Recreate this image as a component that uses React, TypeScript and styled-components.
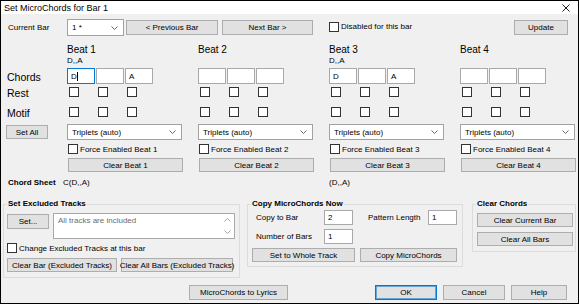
import React from 'react';
import styled, { createGlobalStyle, css } from 'styled-components';

const GlobalStyle = createGlobalStyle`
  html, body {
    margin: 0;
    padding: 0;
    background: #fff;
  }
  body {
    font-family: 'Liberation Sans', Arial, sans-serif;
    font-size: 8px;
    color: #000;
  }
  * {
    box-sizing: border-box;
  }
`;

type Beat = {
  n: number;
  chord: string;
  inputs: string[];
  focused?: boolean;
};

const beats: Beat[] = [
  { n: 1, chord: 'D,,A', inputs: ['D', '', 'A'], focused: true },
  { n: 2, chord: '', inputs: ['', '', ''] },
  { n: 3, chord: 'D,,A', inputs: ['D', '', 'A'] },
  { n: 4, chord: '', inputs: ['', '', ''] },
];

const Chevron = ({ up }: { up?: boolean }) => (
  <svg width="7" height="4" viewBox="0 0 7 4">
    <path d={up ? 'M0.5 3.5 L3.5 0.5 L6.5 3.5' : 'M0.5 0.5 L3.5 3.5 L6.5 0.5'} fill="none" stroke="#5a5a5a" strokeWidth="0.9" />
  </svg>
);

const CloseIcon = () => (
  <svg width="8" height="8" viewBox="0 0 8 8">
    <path d="M0.5 0.5 L7.5 7.5 M7.5 0.5 L0.5 7.5" stroke="#000" strokeWidth="0.9" />
  </svg>
);

const Check = ({ label }: { label: string }) => (
  <CheckLabel>
    <Box />
    <span>{label}</span>
  </CheckLabel>
);

const App = () => {
  return (
    <>
      <GlobalStyle />
      <Window>
        <TitleBar>
          <TitleText>Set MicroChords for Bar 1</TitleText>
          <CloseIcon />
        </TitleBar>
        <Body>
          <TopRow>
            <RowLabel>Current Bar</RowLabel>
            <Combo $w={57} $h={17}>
              <span>1 *</span>
              <Chevron />
            </Combo>
            <Button $w={92} style={{ marginLeft: 2 }}>&lt; Previous Bar</Button>
            <Button $w={91} style={{ marginLeft: 4 }}>Next Bar &gt;</Button>
            <TopCheck>
              <Check label="Disabled for this bar" />
            </TopCheck>
            <UpdateButton $w={54}>Update</UpdateButton>
          </TopRow>

          <BeatGrid>
            <span />
            {beats.map((b) => (
              <BeatHead key={`h${b.n}`}>
                <BeatTitle>Beat {b.n}</BeatTitle>
                <BeatChord>{b.chord}</BeatChord>
              </BeatHead>
            ))}

            <SideLabel>Chords</SideLabel>
            {beats.map((b) => (
              <Triple key={`c${b.n}`}>
                {b.inputs.map((v, i) => (
                  <ChordInput key={i} $focused={b.focused && i === 0}>
                    {v}
                    {b.focused && i === 0 && <Caret />}
                  </ChordInput>
                ))}
              </Triple>
            ))}

            <SideLabel>Rest</SideLabel>
            {beats.map((b) => (
              <BoxRow key={`r${b.n}`}>
                <Box />
                <Box />
                <Box />
              </BoxRow>
            ))}

            <SideLabel>Motif</SideLabel>
            {beats.map((b) => (
              <BoxRow key={`m${b.n}`}>
                <Box />
                <Box />
                <Box />
              </BoxRow>
            ))}

            <SetAllButton $w={42} $h={14}>Set All</SetAllButton>
            {beats.map((b) => (
              <Combo key={`t${b.n}`} $w={115} $h={16}>
                <span>Triplets (auto)</span>
                <Chevron />
              </Combo>
            ))}

            <span />
            {beats.map((b) => (
              <ForceCell key={`f${b.n}`}>
                <Check label={`Force Enabled Beat ${b.n}`} />
              </ForceCell>
            ))}

            <span />
            {beats.map((b) => (
              <ClearBeat key={`x${b.n}`} $w={115} $h={14}>
                Clear Beat {b.n}
              </ClearBeat>
            ))}
          </BeatGrid>

          <ChordSheetRow>
            <ChordSheetLabel>Chord Sheet</ChordSheetLabel>
            <ChordSheetValue>C(D,,A)</ChordSheetValue>
            <span>(D,,A)</span>
          </ChordSheetRow>

          <GroupsRow>
            <Group $w={237} $h={79}>
              <Legend>Set Excluded Tracks</Legend>
              <ExcludedContent>
                <ExcludedTop>
                  <SetButton $w={42}>Set...</SetButton>
                  <TrackList>
                    <span>All tracks are included</span>
                    <ScrollArrows>
                      <Chevron up />
                      <Chevron />
                    </ScrollArrows>
                  </TrackList>
                </ExcludedTop>
                <ExcludedCheck>
                  <Check label="Change Excluded Tracks at this bar" />
                </ExcludedCheck>
                <ButtonPair $gap={4}>
                  <Button $w={110} $h={14}>Clear Bar (Excluded Tracks)</Button>
                  <Button $w={112} $h={14}>Clear All Bars (Excluded Tracks)</Button>
                </ButtonPair>
              </ExcludedContent>
            </Group>

            <Group $w={216} $h={68} $ml={7}>
              <Legend>Copy MicroChords Now</Legend>
              <CopyContent>
                <CopyGrid>
                  <FieldLabel>Copy to Bar</FieldLabel>
                  <NumberInput>2</NumberInput>
                  <FieldLabel $indent={15}>Pattern Length</FieldLabel>
                  <NumberInput>1</NumberInput>
                  <FieldLabel>Number of Bars</FieldLabel>
                  <NumberInput>1</NumberInput>
                </CopyGrid>
                <ButtonPair $gap={5}>
                  <Button $w={103} $h={14}>Set to Whole Track</Button>
                  <Button $w={97} $h={14}>Copy MicroChords</Button>
                </ButtonPair>
              </CopyContent>
            </Group>

            <Group $w={104} $h={53} $ml={9}>
              <Legend>Clear Chords</Legend>
              <ClearContent>
                <Button $w={96} $h={14}>Clear Current Bar</Button>
                <Button $w={96} $h={14}>Clear All Bars</Button>
              </ClearContent>
            </Group>
          </GroupsRow>

          <BottomRow>
            <Button $w={99} style={{ marginLeft: 186 }}>MicroChords to Lyrics</Button>
            <Button $w={62} $default style={{ marginLeft: 87 }}>OK</Button>
            <Button $w={62} style={{ marginLeft: 6 }}>Cancel</Button>
            <Button $w={56} style={{ marginLeft: 6 }}>Help</Button>
          </BottomRow>
        </Body>
      </Window>
    </>
  );
};

export default App;

const Window = styled.div`
  width: 579px;
  height: 304px;
  border: 1px solid #000;
  background: #f0f0f0;
  display: flex;
  flex-direction: column;
  overflow: hidden;
`;

const TitleBar = styled.div`
  height: 13px;
  flex: none;
  background: #fff;
  display: flex;
  align-items: center;
  justify-content: space-between;
  padding: 0 8px 0 3px;
`;

const TitleText = styled.span`
  font-size: 9px;
`;

const Body = styled.div`
  display: flex;
  flex-direction: column;
  padding: 0 2px;
`;

const TopRow = styled.div`
  display: flex;
  align-items: center;
  height: 17px;
  margin-top: 5px;
  padding-left: 3px;
`;

const RowLabel = styled.span`
  width: 61px;
  flex: none;
  padding-left: 2px;
`;

const Combo = styled.div<{ $w: number; $h: number }>`
  width: ${({ $w }) => $w}px;
  height: ${({ $h }) => $h}px;
  flex: none;
  display: flex;
  align-items: center;
  justify-content: space-between;
  padding: 0 5px 0 4px;
  background: #fff;
  border: 1px solid #a2a2a2;
`;

const Button = styled.button<{ $w: number; $h?: number; $default?: boolean }>`
  width: ${({ $w }) => $w}px;
  height: ${({ $h }) => $h ?? 15}px;
  flex: none;
  display: flex;
  align-items: center;
  justify-content: center;
  padding: 0;
  margin: 0;
  background: #e1e1e1;
  border: 1px solid ${({ $default }) => ($default ? '#0078d7' : '#adadad')};
  ${({ $default }) =>
    $default &&
    css`
      box-shadow: inset 0 0 0 1px rgba(0, 120, 215, 0.55);
    `}
  font-family: inherit;
  font-size: 8px;
  color: #000;
  white-space: nowrap;
`;

const UpdateButton = styled(Button)`
  margin-left: auto;
  margin-right: 8px;
`;

const TopCheck = styled.div`
  margin-left: 16px;
`;

const CheckLabel = styled.label`
  display: inline-flex;
  align-items: center;
  gap: 2px;
  white-space: nowrap;
`;

const Box = styled.span`
  width: 10px;
  height: 10px;
  flex: none;
  background: #fff;
  border: 1px solid #333;
`;

const BeatGrid = styled.div`
  display: grid;
  grid-template-columns: 45px repeat(4, 115px);
  grid-template-rows: 24px 16px 16px 24px 16px 18px 14px;
  column-gap: 16px;
  margin-top: 8px;
  padding-left: 3px;
`;

const BeatHead = styled.div`
  display: flex;
  flex-direction: column;
`;

const BeatTitle = styled.span`
  font-size: 10px;
  line-height: 12px;
`;

const BeatChord = styled.span`
  font-size: 8px;
  line-height: 10px;
`;

const SideLabel = styled.span`
  font-size: 10.5px;
  padding: 2px 0 0 1px;
  align-self: center;
  white-space: nowrap;
`;

const Triple = styled.div`
  display: grid;
  grid-template-columns: repeat(3, 28px);
  column-gap: 1px;
`;

const ChordInput = styled.div<{ $focused?: boolean }>`
  height: 16px;
  display: flex;
  align-items: center;
  padding-left: 3px;
  background: #fff;
  border: 1px solid ${({ $focused }) => ($focused ? '#0078d7' : '#a9a9a9')};
`;

const Caret = styled.span`
  width: 1px;
  height: 9px;
  background: #000;
`;

const BoxRow = styled.div`
  display: grid;
  grid-template-columns: repeat(3, 28px);
  column-gap: 1px;
  align-items: center;
  padding-left: 2px;
`;

const SetAllButton = styled(Button)`
  align-self: center;
`;

const ForceCell = styled.div`
  display: flex;
  align-items: center;
  padding-left: 1px;
`;

const ClearBeat = styled(Button)`
  margin-left: 1px;
`;

const ChordSheetRow = styled.div`
  display: flex;
  align-items: center;
  height: 12px;
  margin-top: 4px;
  padding-left: 3px;
`;

const ChordSheetLabel = styled.span`
  width: 57px;
  padding-left: 2px;
  font-weight: bold;
`;

const ChordSheetValue = styled.span`
  width: 266px;
`;

const GroupsRow = styled.div`
  display: flex;
  align-items: flex-start;
  margin-top: 11px;
`;

const Group = styled.fieldset<{ $w: number; $h: number; $ml?: number }>`
  width: ${({ $w }) => $w}px;
  height: ${({ $h }) => $h}px;
  flex: none;
  margin: 0 0 0 ${({ $ml }) => $ml ?? 0}px;
  padding: 0;
  min-width: 0;
  border: 1px solid #dcdcdc;
`;

const Legend = styled.legend`
  margin-left: 3px;
  padding: 0 1px;
  font-weight: bold;
  font-size: 8px;
  line-height: 10px;
`;

const ExcludedContent = styled.div`
  display: flex;
  flex-direction: column;
  padding: 4px 0 0 3px;
`;

const ExcludedTop = styled.div`
  display: flex;
  align-items: flex-start;
  gap: 4px;
`;

const SetButton = styled(Button)`
  margin-top: 1px;
`;

const TrackList = styled.div`
  width: 182px;
  height: 26px;
  display: flex;
  justify-content: space-between;
  padding: 2px 3px 0 4px;
  background: #fff;
  border: 1px solid #a9a9a9;
  color: #6d6d6d;
`;

const ScrollArrows = styled.div`
  display: flex;
  flex-direction: column;
  justify-content: space-between;
  padding: 2px 0 4px;
  opacity: 0.6;
`;

const ExcludedCheck = styled.div`
  height: 12px;
  display: flex;
  align-items: center;
  margin-top: 3px;
`;

const ButtonPair = styled.div<{ $gap: number }>`
  display: flex;
  gap: ${({ $gap }) => $gap}px;
  margin-top: 4px;
`;

const CopyContent = styled.div`
  display: flex;
  flex-direction: column;
  padding: 1px 0 0 4px;
`;

const CopyGrid = styled.div`
  display: grid;
  grid-template-columns: 72px 29px 75px 29px;
  grid-template-rows: 15px 15px;
  row-gap: 4px;
  align-items: center;
`;

const FieldLabel = styled.span<{ $indent?: number }>`
  padding-left: ${({ $indent }) => $indent ?? 4}px;
  white-space: nowrap;
`;

const NumberInput = styled.div`
  height: 15px;
  display: flex;
  align-items: center;
  padding-left: 3px;
  background: #fff;
  border: 1px solid #a9a9a9;
`;

const ClearContent = styled.div`
  display: flex;
  flex-direction: column;
  gap: 5px;
  padding: 4px 0 0 4px;
`;

const BottomRow = styled.div`
  display: flex;
  align-items: center;
  height: 15px;
  margin-top: 7px;
`;
